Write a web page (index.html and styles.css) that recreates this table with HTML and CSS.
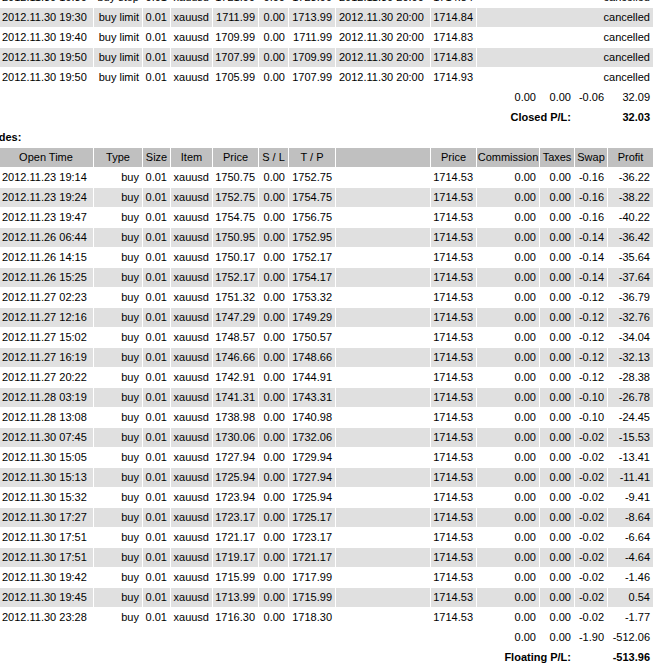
FILE: index.html
```html
<!DOCTYPE html>
<html>
<head>
<meta charset="utf-8">
<title>Statement</title>
<link rel="stylesheet" href="styles.css">
</head>
<body>
<div class="report">
  <div class="tr"><span></span><span class="l">2012.11.30 19:30</span><span>buy stop</span><span>0.01</span><span>xauusd</span><span>1721.99</span><span>0.00</span><span>1723.99</span><span class="l">2012.11.30 20:00</span><span>1714.84</span><span class="span4">cancelled</span></div>
  <div class="tr alt"><span></span><span class="l">2012.11.30 19:30</span><span>buy limit</span><span>0.01</span><span>xauusd</span><span>1711.99</span><span>0.00</span><span>1713.99</span><span class="l">2012.11.30 20:00</span><span>1714.84</span><span class="span4">cancelled</span></div>
  <div class="tr"><span></span><span class="l">2012.11.30 19:40</span><span>buy limit</span><span>0.01</span><span>xauusd</span><span>1709.99</span><span>0.00</span><span>1711.99</span><span class="l">2012.11.30 20:00</span><span>1714.83</span><span class="span4">cancelled</span></div>
  <div class="tr alt"><span></span><span class="l">2012.11.30 19:50</span><span>buy limit</span><span>0.01</span><span>xauusd</span><span>1707.99</span><span>0.00</span><span>1709.99</span><span class="l">2012.11.30 20:00</span><span>1714.83</span><span class="span4">cancelled</span></div>
  <div class="tr"><span></span><span class="l">2012.11.30 19:50</span><span>buy limit</span><span>0.01</span><span>xauusd</span><span>1705.99</span><span>0.00</span><span>1707.99</span><span class="l">2012.11.30 20:00</span><span>1714.93</span><span class="span4">cancelled</span></div>
  <div class="tr"><span class="blank10"></span><span>0.00</span><span>0.00</span><span>-0.06</span><span>32.09</span></div>
  <div class="tr"><span class="blank10"></span><span class="span2 b">Closed P/L:</span><span class="span2 b">32.03</span></div>
  <div class="tr"><span class="full b l">Open Trades:</span></div>
  <div class="tr head"><span>Ticket</span><span>Open Time</span><span>Type</span><span>Size</span><span>Item</span><span>Price</span><span>S / L</span><span>T / P</span><span></span><span>Price</span><span>Commission</span><span>Taxes</span><span>Swap</span><span>Profit</span></div>
  <div class="tr"><span></span><span class="l">2012.11.23 19:14</span><span>buy</span><span>0.01</span><span>xauusd</span><span>1750.75</span><span>0.00</span><span>1752.75</span><span></span><span>1714.53</span><span>0.00</span><span>0.00</span><span>-0.16</span><span>-36.22</span></div>
  <div class="tr alt"><span></span><span class="l">2012.11.23 19:24</span><span>buy</span><span>0.01</span><span>xauusd</span><span>1752.75</span><span>0.00</span><span>1754.75</span><span></span><span>1714.53</span><span>0.00</span><span>0.00</span><span>-0.16</span><span>-38.22</span></div>
  <div class="tr"><span></span><span class="l">2012.11.23 19:47</span><span>buy</span><span>0.01</span><span>xauusd</span><span>1754.75</span><span>0.00</span><span>1756.75</span><span></span><span>1714.53</span><span>0.00</span><span>0.00</span><span>-0.16</span><span>-40.22</span></div>
  <div class="tr alt"><span></span><span class="l">2012.11.26 06:44</span><span>buy</span><span>0.01</span><span>xauusd</span><span>1750.95</span><span>0.00</span><span>1752.95</span><span></span><span>1714.53</span><span>0.00</span><span>0.00</span><span>-0.14</span><span>-36.42</span></div>
  <div class="tr"><span></span><span class="l">2012.11.26 14:15</span><span>buy</span><span>0.01</span><span>xauusd</span><span>1750.17</span><span>0.00</span><span>1752.17</span><span></span><span>1714.53</span><span>0.00</span><span>0.00</span><span>-0.14</span><span>-35.64</span></div>
  <div class="tr alt"><span></span><span class="l">2012.11.26 15:25</span><span>buy</span><span>0.01</span><span>xauusd</span><span>1752.17</span><span>0.00</span><span>1754.17</span><span></span><span>1714.53</span><span>0.00</span><span>0.00</span><span>-0.14</span><span>-37.64</span></div>
  <div class="tr"><span></span><span class="l">2012.11.27 02:23</span><span>buy</span><span>0.01</span><span>xauusd</span><span>1751.32</span><span>0.00</span><span>1753.32</span><span></span><span>1714.53</span><span>0.00</span><span>0.00</span><span>-0.12</span><span>-36.79</span></div>
  <div class="tr alt"><span></span><span class="l">2012.11.27 12:16</span><span>buy</span><span>0.01</span><span>xauusd</span><span>1747.29</span><span>0.00</span><span>1749.29</span><span></span><span>1714.53</span><span>0.00</span><span>0.00</span><span>-0.12</span><span>-32.76</span></div>
  <div class="tr"><span></span><span class="l">2012.11.27 15:02</span><span>buy</span><span>0.01</span><span>xauusd</span><span>1748.57</span><span>0.00</span><span>1750.57</span><span></span><span>1714.53</span><span>0.00</span><span>0.00</span><span>-0.12</span><span>-34.04</span></div>
  <div class="tr alt"><span></span><span class="l">2012.11.27 16:19</span><span>buy</span><span>0.01</span><span>xauusd</span><span>1746.66</span><span>0.00</span><span>1748.66</span><span></span><span>1714.53</span><span>0.00</span><span>0.00</span><span>-0.12</span><span>-32.13</span></div>
  <div class="tr"><span></span><span class="l">2012.11.27 20:22</span><span>buy</span><span>0.01</span><span>xauusd</span><span>1742.91</span><span>0.00</span><span>1744.91</span><span></span><span>1714.53</span><span>0.00</span><span>0.00</span><span>-0.12</span><span>-28.38</span></div>
  <div class="tr alt"><span></span><span class="l">2012.11.28 03:19</span><span>buy</span><span>0.01</span><span>xauusd</span><span>1741.31</span><span>0.00</span><span>1743.31</span><span></span><span>1714.53</span><span>0.00</span><span>0.00</span><span>-0.10</span><span>-26.78</span></div>
  <div class="tr"><span></span><span class="l">2012.11.28 13:08</span><span>buy</span><span>0.01</span><span>xauusd</span><span>1738.98</span><span>0.00</span><span>1740.98</span><span></span><span>1714.53</span><span>0.00</span><span>0.00</span><span>-0.10</span><span>-24.45</span></div>
  <div class="tr alt"><span></span><span class="l">2012.11.30 07:45</span><span>buy</span><span>0.01</span><span>xauusd</span><span>1730.06</span><span>0.00</span><span>1732.06</span><span></span><span>1714.53</span><span>0.00</span><span>0.00</span><span>-0.02</span><span>-15.53</span></div>
  <div class="tr"><span></span><span class="l">2012.11.30 15:05</span><span>buy</span><span>0.01</span><span>xauusd</span><span>1727.94</span><span>0.00</span><span>1729.94</span><span></span><span>1714.53</span><span>0.00</span><span>0.00</span><span>-0.02</span><span>-13.41</span></div>
  <div class="tr alt"><span></span><span class="l">2012.11.30 15:13</span><span>buy</span><span>0.01</span><span>xauusd</span><span>1725.94</span><span>0.00</span><span>1727.94</span><span></span><span>1714.53</span><span>0.00</span><span>0.00</span><span>-0.02</span><span>-11.41</span></div>
  <div class="tr"><span></span><span class="l">2012.11.30 15:32</span><span>buy</span><span>0.01</span><span>xauusd</span><span>1723.94</span><span>0.00</span><span>1725.94</span><span></span><span>1714.53</span><span>0.00</span><span>0.00</span><span>-0.02</span><span>-9.41</span></div>
  <div class="tr alt"><span></span><span class="l">2012.11.30 17:27</span><span>buy</span><span>0.01</span><span>xauusd</span><span>1723.17</span><span>0.00</span><span>1725.17</span><span></span><span>1714.53</span><span>0.00</span><span>0.00</span><span>-0.02</span><span>-8.64</span></div>
  <div class="tr"><span></span><span class="l">2012.11.30 17:51</span><span>buy</span><span>0.01</span><span>xauusd</span><span>1721.17</span><span>0.00</span><span>1723.17</span><span></span><span>1714.53</span><span>0.00</span><span>0.00</span><span>-0.02</span><span>-6.64</span></div>
  <div class="tr alt"><span></span><span class="l">2012.11.30 17:51</span><span>buy</span><span>0.01</span><span>xauusd</span><span>1719.17</span><span>0.00</span><span>1721.17</span><span></span><span>1714.53</span><span>0.00</span><span>0.00</span><span>-0.02</span><span>-4.64</span></div>
  <div class="tr"><span></span><span class="l">2012.11.30 19:42</span><span>buy</span><span>0.01</span><span>xauusd</span><span>1715.99</span><span>0.00</span><span>1717.99</span><span></span><span>1714.53</span><span>0.00</span><span>0.00</span><span>-0.02</span><span>-1.46</span></div>
  <div class="tr alt"><span></span><span class="l">2012.11.30 19:45</span><span>buy</span><span>0.01</span><span>xauusd</span><span>1713.99</span><span>0.00</span><span>1715.99</span><span></span><span>1714.53</span><span>0.00</span><span>0.00</span><span>-0.02</span><span>0.54</span></div>
  <div class="tr"><span></span><span class="l">2012.11.30 23:28</span><span>buy</span><span>0.01</span><span>xauusd</span><span>1716.30</span><span>0.00</span><span>1718.30</span><span></span><span>1714.53</span><span>0.00</span><span>0.00</span><span>-0.02</span><span>-1.77</span></div>
  <div class="tr"><span class="blank10"></span><span>0.00</span><span>0.00</span><span>-1.90</span><span>-512.06</span></div>
  <div class="tr"><span class="blank10"></span><span class="span2 b">Floating P/L:</span><span class="span2 b">-513.96</span></div>
</div>
</body>
</html>
```

FILE: styles.css
```css
html, body {
  margin: 0;
  padding: 0;
  overflow: hidden;
  background: #ffffff;
}

body {
  font-family: "Liberation Sans", Arial, sans-serif;
  font-size: 11px;
  line-height: 13px;
  color: #000000;
}

.report {
  display: grid;
  grid-template-columns: 50px 94px 48px 27px 41px 45px 29px 46px 94px 45px 62px 34px 32px 45px;
  gap: 1px;
  width: 705px;
  margin: -12px 0 0 -52px;
}

.tr {
  display: contents;
}

.report span {
  display: block;
  padding: 3px 3px 3px 2px;
  white-space: nowrap;
  text-align: right;
}

.report span.l {
  text-align: left;
  padding-left: 3px;
}

.alt > span {
  background: #e0e0e0;
}

.head > span {
  background: #c0c0c0;
  text-align: center;
  padding-left: 0;
  padding-right: 0;
}

.span4 {
  grid-column: span 4;
}

.span2 {
  grid-column: span 2;
}

.blank10 {
  grid-column: span 10;
}

.full {
  grid-column: 1 / -1;
}

.b {
  font-weight: bold;
}
```
